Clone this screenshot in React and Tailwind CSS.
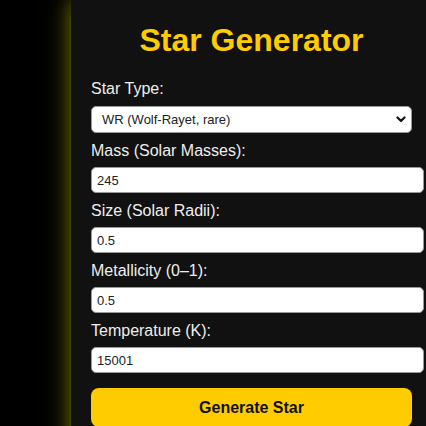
const fields = [
  { label: "Mass (Solar Masses):", value: "245" },
  { label: "Size (Solar Radii):", value: "0.5" },
  { label: "Metallicity (0–1):", value: "0.5" },
  { label: "Temperature (K):", value: "15001" },
];

export default function App() {
  return (
    <div className="w-[426px] h-[426px] overflow-hidden bg-black font-['Liberation_Sans',Arial,sans-serif]">
      <div className="ml-[71px] w-[361px] h-[480px] bg-[#111111] px-5 shadow-[0_0_22px_rgba(255,255,0,0.5)]">
        <h1 className="pt-[22px] text-center text-[32px] leading-[37px] font-bold text-[#ffcc00]">
          Star Generator
        </h1>
        <label className="block mt-[21px] mb-[8px] text-[16px] leading-[18px] text-[#eeeeee]">
          Star Type:
        </label>
        <div className="relative w-full">
          <select
            defaultValue="WR"
            className="appearance-none block w-full h-[27px] pl-[10px] pr-8 text-[13px] text-[#222] bg-white border border-[#999] rounded-[5px] outline-none"
          >
            <option value="WR">WR (Wolf-Rayet, rare)</option>
          </select>
          <svg
            className="absolute right-[6px] top-[9px] w-[10px] h-[9px] pointer-events-none"
            viewBox="0 0 10 9"
            fill="none"
            stroke="#111"
            strokeWidth="2.2"
            strokeLinecap="round"
            strokeLinejoin="round"
          >
            <path d="M1.5 2.5 L5 6 L8.5 2.5" />
          </svg>
        </div>
        {fields.map((f) => (
          <div key={f.label}>
            <label className="block mt-[9px] mb-[7px] text-[16px] leading-[18px] text-[#eeeeee]">
              {f.label}
            </label>
            <input
              type="text"
              defaultValue={f.value}
              className="box-content block w-full h-[24px] px-[5px] py-0 text-[13px] text-[#222] bg-white border border-[#999] rounded-[5px] outline-none"
            />
          </div>
        ))}
        <button className="block w-full h-[39px] mt-[15px] bg-[#ffcc00] rounded-[8px] text-[16px] font-bold text-[#111]">
          Generate Star
        </button>
      </div>
    </div>
  );
}
